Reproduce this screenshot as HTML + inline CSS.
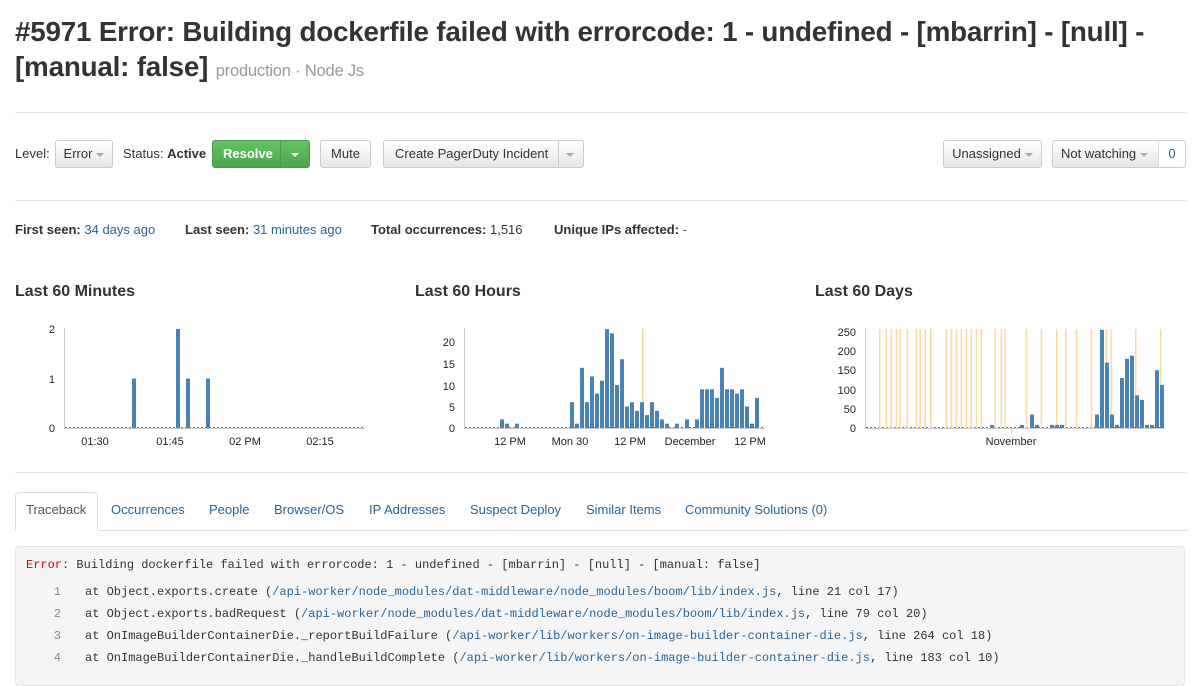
<!DOCTYPE html>
<html><head><meta charset="utf-8">
<style>
*{box-sizing:border-box}
body{margin:0;width:1202px;height:673px;overflow:hidden;font-family:"Liberation Sans",Arial,sans-serif;color:#333;background:#fff;font-size:13px}
h1{position:absolute;left:15px;top:14px;margin:0;font-size:27.8px;line-height:35px;font-weight:bold;width:1180px;letter-spacing:-0.2px}
h1 small{font-size:16.5px;color:#999;font-weight:normal}
.hr{position:absolute;left:15px;right:15px;height:1px;background:#e5e5e5}
.btn{position:absolute;height:28px;border:1px solid #ccc;border-radius:3px;background:linear-gradient(#fff,#e6e6e6);font-size:13px;line-height:26px;text-align:center;color:#333}
.caret{display:inline-block;width:0;height:0;border-left:4px solid transparent;border-right:4px solid transparent;border-top:4px solid #aaa;vertical-align:middle;margin-left:4px}
.lbl{position:absolute;font-size:13px}
a,.a{color:#2a6496;text-decoration:none}
.t{position:absolute;font-size:16px;font-weight:bold}
.tabs a{position:absolute;top:502px;font-size:13px}
pre{position:absolute;left:15px;top:546px;width:1170px;height:140px;margin:0;background:#f5f5f5;border:1px solid #e3e3e3;border-radius:4px;font-family:"Liberation Mono",monospace;font-size:12px;line-height:22px;padding:7px 10px;color:#333}
.n{color:#888;display:inline-block;width:59px;text-align:right;padding-right:24px}
</style></head><body>
<h1>#5971 Error: Building dockerfile failed with errorcode: 1 - undefined - [mbarrin] - [null] - [manual: false] <small>production · Node Js</small></h1>
<div class="hr" style="top:112px"></div>

<div class="lbl" style="left:15px;top:146px">Level:</div>
<div class="btn" style="left:55px;top:140px;width:58px">Error<span class="caret"></span></div>
<div class="lbl" style="left:123px;top:146px">Status: <b>Active</b></div>
<div class="btn" style="left:212px;top:140px;width:98px;background:linear-gradient(#62c462,#51a351);border-color:#4a9a4a;color:#fff;font-weight:bold;text-align:left;padding-left:10px">Resolve<span style="position:absolute;left:67px;top:0;bottom:0;border-left:1px solid #449944"></span><span class="caret" style="border-top-color:#fff;position:absolute;left:78px;top:12px;margin:0"></span></div>
<div class="btn" style="left:320px;top:140px;width:51px">Mute</div>
<div class="btn" style="left:383px;top:140px;width:201px;text-align:left;padding-left:11px">Create PagerDuty Incident<span style="position:absolute;left:174px;top:0;bottom:0;border-left:1px solid #ccc"></span><span class="caret" style="position:absolute;left:182px;top:12px;margin:0"></span></div>
<div class="btn" style="left:943px;top:140px;width:99px">Unassigned<span class="caret"></span></div>
<div class="btn" style="left:1052px;top:140px;width:134px;text-align:left;padding-left:8px">Not watching<span class="caret"></span><span style="position:absolute;left:105px;top:0;bottom:0;width:27px;border-left:1px solid #ddd;background:#fff;text-align:center;color:#2a6496;border-radius:0 3px 3px 0">0</span></div>

<div class="hr" style="top:200px"></div>
<div class="lbl" style="left:15px;top:222px"><b>First seen:</b> <a>34 days ago</a></div>
<div class="lbl" style="left:185px;top:222px"><b>Last seen:</b> <a>31 minutes ago</a></div>
<div class="lbl" style="left:371px;top:222px"><b>Total occurrences:</b> 1,516</div>
<div class="lbl" style="left:554px;top:222px"><b>Unique IPs affected:</b> <a>-</a></div>

<div class="t" style="left:15px;top:283px">Last 60 Minutes</div>
<div class="t" style="left:415px;top:283px">Last 60 Hours</div>
<div class="t" style="left:815px;top:283px">Last 60 Days</div>

<svg id="ch" width="1202" height="673" style="position:absolute;left:0;top:0" font-family="Liberation Sans, sans-serif" font-size="11"></svg>

<div class="hr" style="top:472px"></div>
<div style="position:absolute;left:15px;top:492px;width:83px;height:39px;border:1px solid #ddd;border-bottom-color:#fff;border-radius:4px 4px 0 0;background:#fff"></div>
<div class="hr" style="top:530px;left:98px;background:#ddd"></div>
<div class="tabs">
<a style="left:26px;color:#555">Traceback</a>
<a style="left:111px">Occurrences</a>
<a style="left:209px">People</a>
<a style="left:274px">Browser/OS</a>
<a style="left:369px">IP Addresses</a>
<a style="left:470px">Suspect Deploy</a>
<a style="left:586px">Similar Items</a>
<a style="left:685px">Community Solutions (0)</a>
</div>
<pre><span style="color:#d00">Error</span>: Building dockerfile failed with errorcode: 1 - undefined - [mbarrin] - [null] - [manual: false]
<span style="display:block;height:5px"></span><span class="n">1</span>at Object.exports.create (<span class="a">/api-worker/node_modules/dat-middleware/node_modules/boom/lib/index.js</span>, line 21 col 17)
<span class="n">2</span>at Object.exports.badRequest (<span class="a">/api-worker/node_modules/dat-middleware/node_modules/boom/lib/index.js</span>, line 79 col 20)
<span class="n">3</span>at OnImageBuilderContainerDie._reportBuildFailure (<span class="a">/api-worker/lib/workers/on-image-builder-container-die.js</span>, line 264 col 18)
<span class="n">4</span>at OnImageBuilderContainerDie._handleBuildComplete (<span class="a">/api-worker/lib/workers/on-image-builder-container-die.js</span>, line 183 col 10)</pre>

<script>
var s='',B='#4a82b4',O='#fdd9a0';
function r(x,y,w,h,c){s+='<rect x="'+x+'" y="'+y+'" width="'+w+'" height="'+h+'" fill="'+c+'"/>';}
function t(x,y,v,a){s+='<text x="'+x+'" y="'+y+'" text-anchor="'+(a||'middle')+'" fill="#222">'+v+'</text>';}
function axis(x0,x1){r(x0,328,1,101,'#ccc');r(x0,428,x1-x0,1,'#ccc');for(var x=x0+1;x<x1;x+=4)r(x,427,2,1,B);}
axis(64,365);
[[132,1],[176,2],[186,1],[206,1]].forEach(function(b){var h=b[1]*49.5;r(b[0],428-h,4,h,B);});
t(55,333,'2','end');t(55,383,'1','end');t(55,432,'0','end');
t(95,445,'01:30');t(170,445,'01:45');t(245,445,'02 PM');t(320,445,'02:15');
axis(464,765);
r(642,329,1.5,99,O);
var H=[0,0,0,0,0,0,0,2,1,0,1,0,0,0,0,0,0,0,0,0,0,6,1,14,6,12,8,11,23,22,10,16,5,6,4,6,3,6,4,2,1,0,1,0,2,0,2,9,9,9,7,14,9,9,8,9,5,1,7,0];
H.forEach(function(v,i){if(v){var h=v*4.3;r(465+i*5,428-h,4,h,B);}});
t(455,346,'20','end');t(455,368,'15','end');t(455,390,'10','end');t(455,411,'5','end');t(455,432,'0','end');
t(510,445,'12 PM');t(570,445,'Mon 30');t(630,445,'12 PM');t(690,445,'December');t(750,445,'12 PM');
axis(865,1165);r(1011,428,1,5,'#ccc');
[237,257,272,287,298,320,347,358,373,390,437,452,467,482,497,512,527,542,583,602,613,677,722,768,795,827,872,917,932,1005,1080].forEach(function(v){r(800+v/3,329,1.5,99,O);});
var D={25:8,31:8,33:35,34:8,37:8,38:8,39:8,46:35,47:255,48:170,49:35,50:8,51:130,52:180,53:188,54:85,55:73,56:8,57:8,58:150,59:112};
for(var k in D){var h=D[k]*0.385;r(865+k*5,428-h,4,h,B);}
t(856,336,'250','end');t(856,355,'200','end');t(856,374,'150','end');t(856,394,'100','end');t(856,413,'50','end');t(856,432,'0','end');
t(1011,445,'November');
document.getElementById('ch').innerHTML=s;
</script>
</body></html>
